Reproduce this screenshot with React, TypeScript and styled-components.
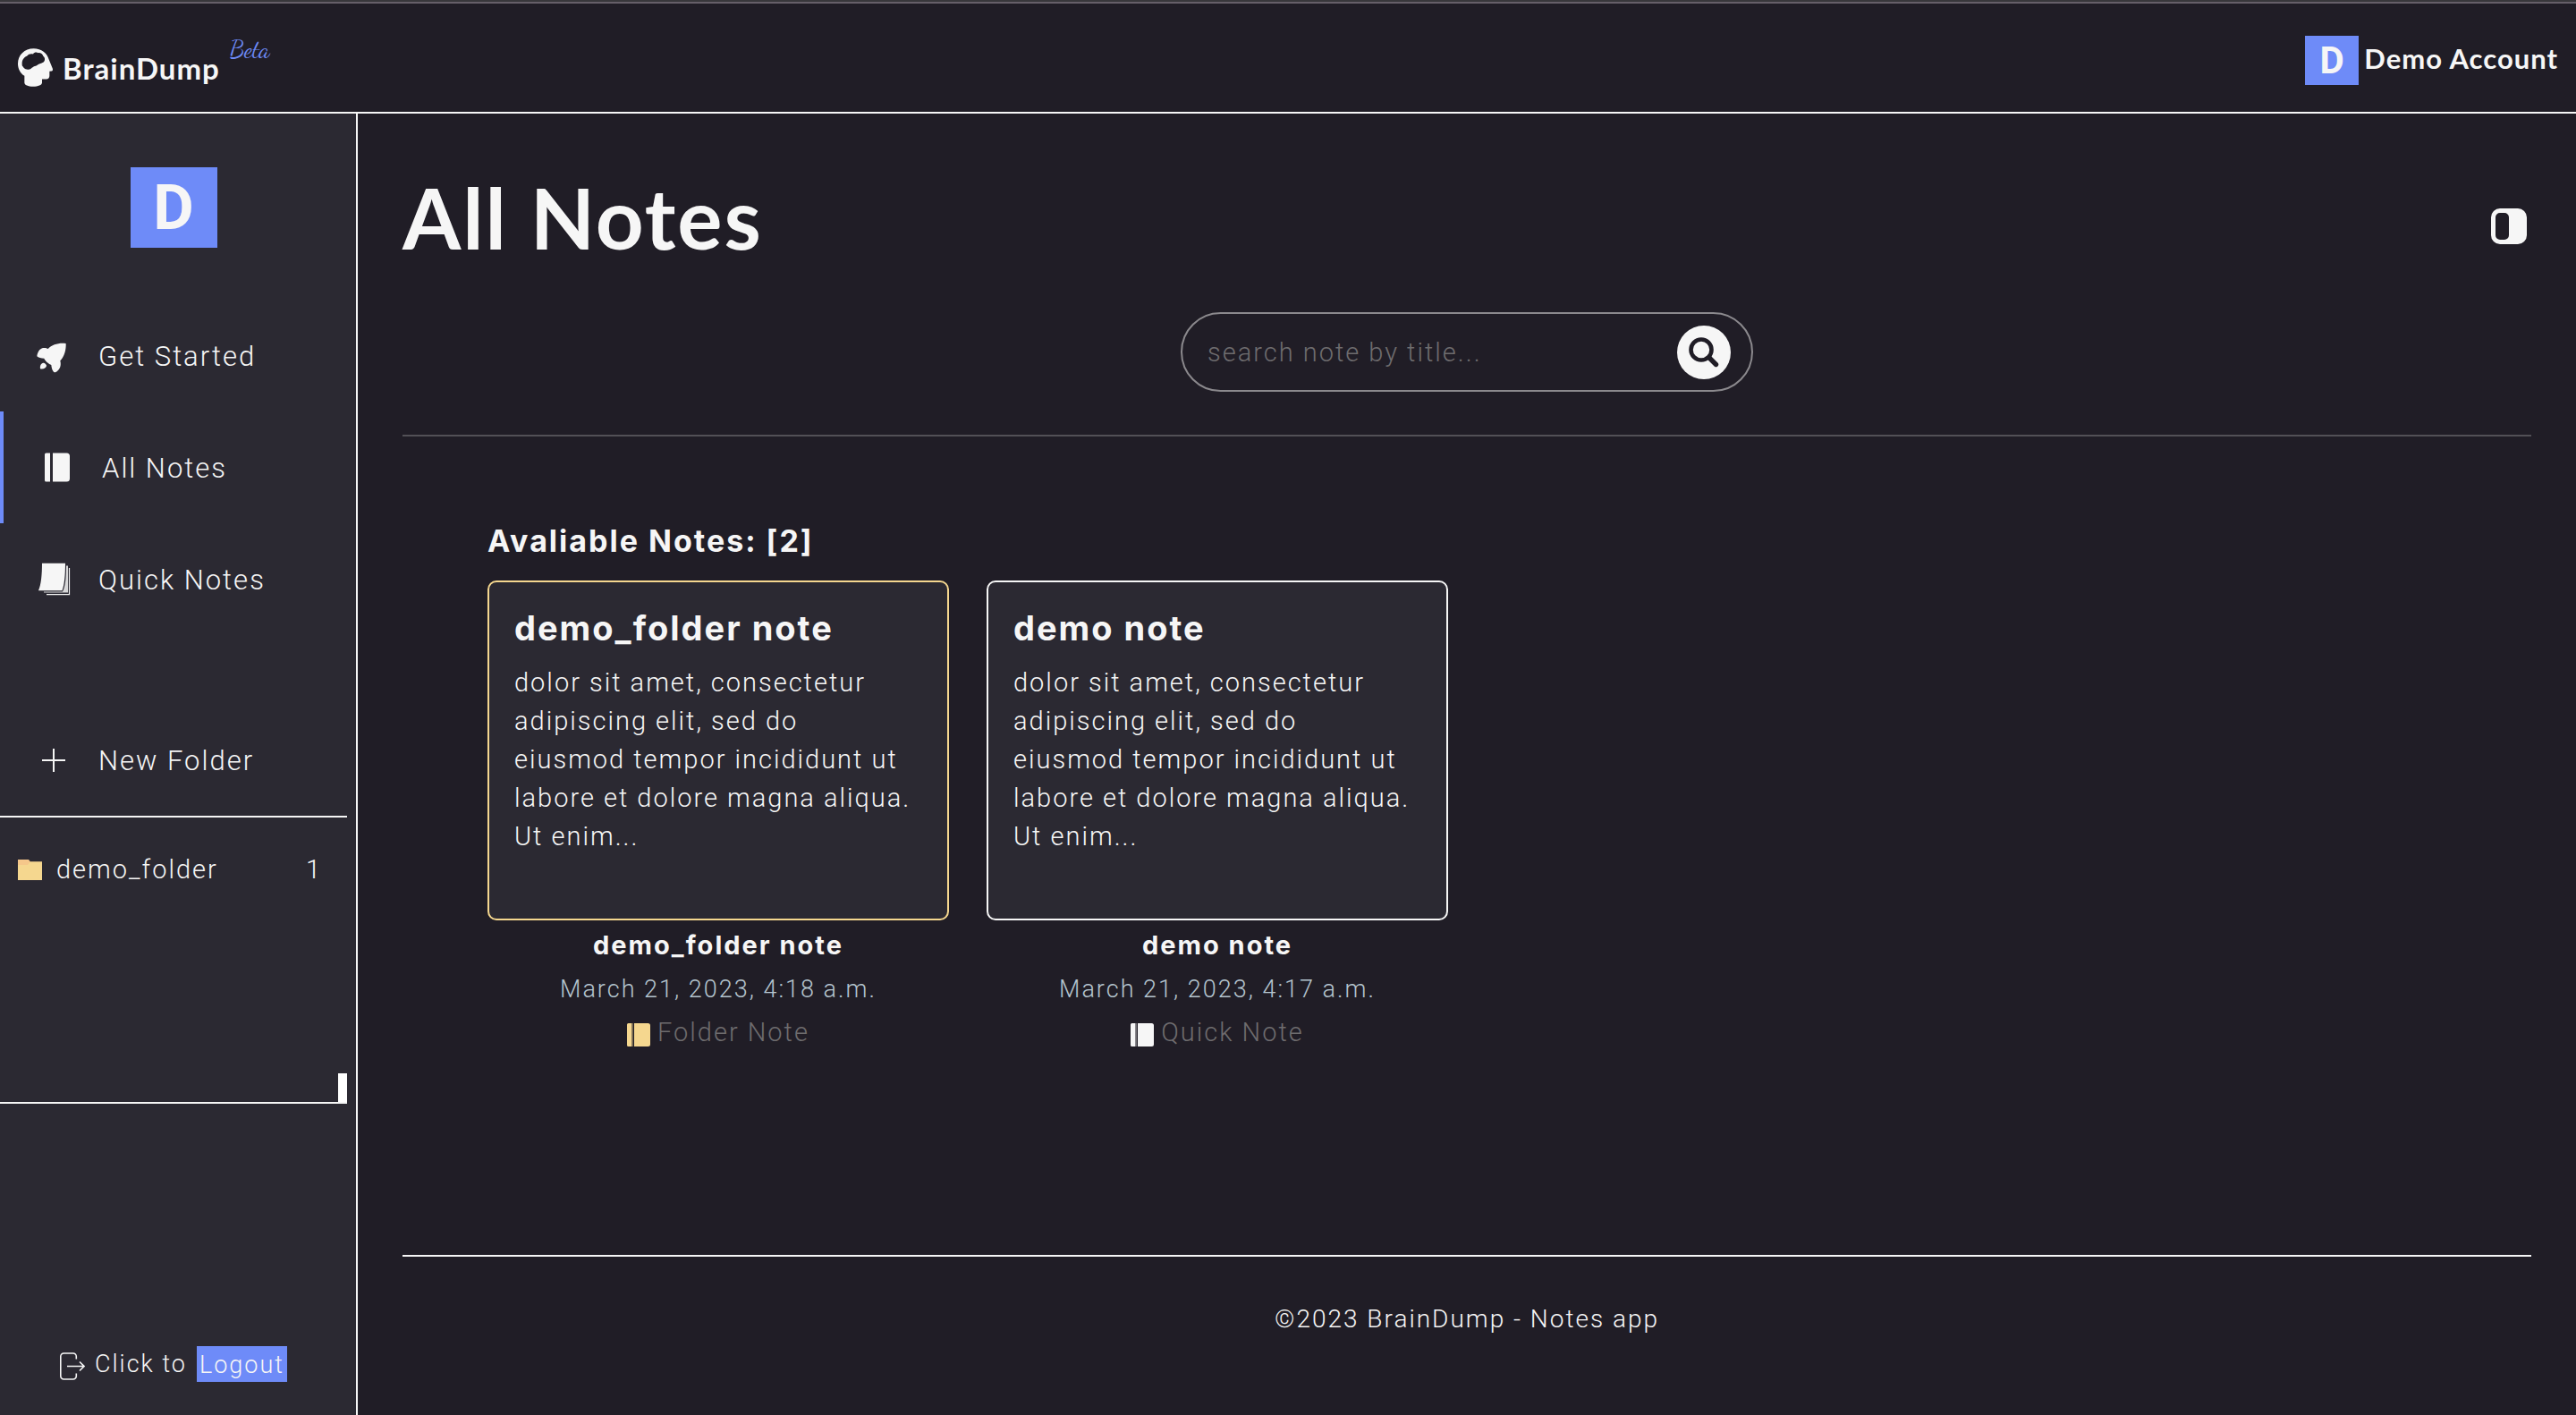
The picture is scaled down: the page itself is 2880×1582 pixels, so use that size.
import React from "react";
import styled, { createGlobalStyle, css } from "styled-components";

const color = {
  page: "#201d26",
  panel: "#2b2932",
  text: "#f6f6f6",
  muted: "#6e6c6e",
  date: "#b4c4ce",
  accent: "#6e8bf8",
  folder: "#f5d78f",
};

const display = css`
  font-family: Lato, "Liberation Sans", sans-serif;
  font-weight: 700;
`;

const heading = css`
  font-family: Inter, "Liberation Sans", sans-serif;
  font-weight: 700;
`;

const GlobalStyle = createGlobalStyle`
  *, *::before, *::after { box-sizing: border-box; }
  body {
    margin: 0;
    background: ${color.page};
    color: ${color.text};
    font-family: Roboto, "Liberation Sans", sans-serif;
    font-weight: 300;
    font-size: 29px;
    line-height: 40px;
    letter-spacing: 2px;
  }
  h1, h2, h3, p, ul { margin: 0; padding: 0; }
  ul { list-style: none; }
  a { color: inherit; text-decoration: none; }
  button, input {
    font: inherit;
    color: inherit;
    letter-spacing: inherit;
    border: 0;
    padding: 0;
    background: none;
  }
  button { cursor: pointer; }
  svg { display: block; flex: none; }
`;

const Page = styled.div`
  display: flex;
  flex-direction: column;
  min-height: 100vh;
  border-top: 2px solid #38373b;
`;

const Header = styled.header`
  display: flex;
  justify-content: space-between;
  align-items: flex-start;
  padding: 36px 20px 28px;
  border-top: 2px solid #665f69;
  border-bottom: 2px solid ${color.text};
  letter-spacing: 1px;
`;

const Brand = styled.a`
  display: flex;
  align-items: flex-end;
  gap: 11px;
  height: 57px;
`;

const BrandName = styled.span`
  ${display}
  font-size: 33px;
  line-height: 42px;
`;

const Beta = styled.sup`
  align-self: flex-start;
  color: ${color.accent};
  font-family: "Dancing Script", "Liberation Serif", cursive;
  font-weight: 400;
  font-size: 27px;
  line-height: 32px;
  letter-spacing: 0;
`;

const Account = styled.a`
  ${display}
  display: flex;
  gap: 6px;
  font-size: 31px;
  line-height: 50px;
`;

const Avatar = styled.span<{ $large?: boolean }>`
  flex: none;
  width: ${(p) => (p.$large ? 97 : 60)}px;
  height: ${(p) => (p.$large ? 90 : 55)}px;
  background: ${color.accent};
  font-family: Roboto, "Liberation Sans", sans-serif;
  font-weight: 700;
  font-size: ${(p) => (p.$large ? 70 : 42)}px;
  line-height: ${(p) => (p.$large ? 90 : 56)}px;
  letter-spacing: 0;
  text-align: center;
`;

const Body = styled.div`
  display: flex;
  flex: 1;
`;

const Sidebar = styled.aside`
  display: flex;
  flex-direction: column;
  flex: none;
  width: 400px;
  padding: 60px 10px 37px 0;
  background: ${color.panel};
  border-right: 2px solid ${color.text};
`;

const Profile = styled.div`
  display: flex;
  justify-content: center;
  padding-bottom: 58px;
`;

const navItem = css`
  display: flex;
  align-items: center;
  gap: 30px;
  width: 100%;
  height: 125px;
  padding-left: 40px;
  font-size: 31px;
  text-align: left;
`;

const NavLink = styled.a<{ $active?: boolean }>`
  ${navItem}
  border-left: ${(p) => (p.$active ? `4px solid ${color.accent}` : "0")};
`;

const NewFolder = styled.button`
  ${navItem}
  flex: none;
  margin-top: 77px;
`;

const NavLabel = styled.span`
  padding-top: 3px;
`;

const IconSlot = styled.span`
  display: flex;
  align-items: center;
  flex: none;
  width: 40px;
  height: 40px;
`;

const Folders = styled.section`
  display: flex;
  flex-direction: column;
  flex: none;
  height: 322px;
  border-top: 2px solid ${color.text};
  border-bottom: 2px solid ${color.text};
`;

const FolderRow = styled.a`
  display: flex;
  align-items: center;
  gap: 16px;
  padding: 38px 28px 0 20px;
`;

const FolderCount = styled.span`
  margin-left: auto;
`;

const ScrollThumb = styled.div`
  width: 10px;
  height: 32px;
  margin: auto 0 0 auto;
  background: #fff;
`;

const LogoutRow = styled.div`
  display: flex;
  align-items: center;
  justify-content: center;
  gap: 11px;
  margin-top: auto;
  font-size: 27px;
`;

const LogoutButton = styled.button`
  padding: 2px 3px 0;
  background: ${color.accent};
  line-height: 38px;
`;

const Main = styled.main`
  display: flex;
  flex-direction: column;
  flex: 1;
  min-width: 0;
  padding: 58px 50px 0;
`;

const TitleBar = styled.div`
  display: flex;
  justify-content: space-between;
  align-items: flex-end;
`;

const Title = styled.h1`
  ${display}
  font-size: 94px;
  line-height: 115px;
`;

const LayoutToggle = styled.button`
  padding: 0 5px 27px 0;
`;

const Search = styled.form`
  display: flex;
  align-items: center;
  align-self: center;
  width: 640px;
  height: 89px;
  margin: 49px 0 48px;
  padding: 0 23px 0 28px;
  border: 2px solid #8b898d;
  border-radius: 45px;
`;

const SearchInput = styled.input`
  flex: 1;
  min-width: 0;
  outline: 0;
  &::placeholder {
    color: ${color.muted};
    opacity: 1;
  }
`;

const SearchButton = styled.button`
  display: grid;
  place-items: center;
  width: 60px;
  height: 60px;
  border-radius: 50%;
  background: ${color.text};
  color: ${color.page};
`;

const Notes = styled.section`
  padding: 95px 95px 60px;
  border-top: 2px solid #525056;
`;

const NotesHeading = styled.h2`
  ${heading}
  font-size: 34px;
  line-height: 44px;
`;

const NoteGrid = styled.ul`
  display: flex;
  flex-wrap: wrap;
  gap: 42px;
  padding-top: 22px;
`;

const NoteItem = styled.li`
  display: flex;
  flex-direction: column;
  align-items: center;
  gap: 8px;
  width: 516px;
`;

const Card = styled.a<{ $edge: string }>`
  width: 100%;
  height: 380px;
  padding: 28px 38px 28px 28px;
  background: ${color.panel};
  border: 2px solid ${(p) => p.$edge};
  border-radius: 10px;
`;

const CardTitle = styled.h3`
  ${heading}
  padding-bottom: 17px;
  font-size: 38px;
  line-height: 46px;
`;

const CardText = styled.p`
  line-height: 43px;
`;

const Caption = styled.p`
  ${heading}
`;

const NoteDate = styled.p`
  color: ${color.date};
  font-size: 27px;
  line-height: 42px;
`;

const NoteKind = styled.p`
  display: flex;
  align-items: center;
  gap: 8px;
  color: ${color.muted};
  line-height: 38px;
`;

const Footer = styled.footer`
  margin-top: auto;
  padding: 50px 0 87px;
  border-top: 2px solid ${color.text};
  font-size: 28px;
  text-align: center;
`;

const HeadLogo = () => (
  <svg width="39" height="43" viewBox="0 0 117 128" fill={color.text} fillRule="evenodd" aria-hidden="true">
    <path d="M53 0C79 0 98 15 104 37L116 66C118 71 117 76 112 76L106 77V92C106 99 102 103 95 103L81 103V115C81 122 68 128 51 128S22 122 22 115V92C8 83 0 67 0 51C0 22 22 0 53 0ZM14 54C13 41 19 30 30 26C35 18 45 17 51 19C54 13 63 12 68 15C76 14 83 19 85 26C91 31 92 39 87 45C82 48 78 50 74 51C68 53 64 56 60 59C54 59 51 63 47 65C43 70 37 72 30 70C24 70 19 66 18 62C15 60 14 57 14 54Z" />
  </svg>
);

const RocketIcon = () => (
  <svg width="40" height="40" viewBox="30 22 120 120" fill={color.text} aria-hidden="true">
    <path d="M131 40C132 61 126 84 112 98C116 114 112 129 96 137C88 138 83 125 82 112C74 109 62 99 58 90C48 90 38 87 34 83C35 70 43 57 54 55C61 54 68 56 71 58C85 43 108 37 131 40Z" />
    <path d="M45 125C43 113 49 105 57 105C62 107 66 111 66 115C64 123 56 127 45 125Z" />
  </svg>
);

const AllNotesIcon = () => (
  <svg width="40" height="40" viewBox="0 0 40 40" fill={color.text} aria-hidden="true">
    <path d="M7.500 3.500H12V35.500H7.500A1.500 1.500 0 0 1 6 34V5A1.500 1.500 0 0 1 7.500 3.500ZM15 3.500H30.500A3.500 3.500 0 0 1 34 7V32A3.500 3.500 0 0 1 30.500 35.500H15Z" />
  </svg>
);

const SmallBookIcon = ({ fill }: { fill: string }) => (
  <svg width="26" height="32" viewBox="0 0 26 32" fill={fill} aria-hidden="true">
    <path d="M1.500 6H5.500V32H1.500A1.500 1.500 0 0 1 0 30.500V7.500A1.500 1.500 0 0 1 1.500 6ZM8 6H23.500A2.500 2.500 0 0 1 26 8.500V29.500A2.500 2.500 0 0 1 23.500 32H8Z" />
    <path d="M6.200 6H7V32H6.200Z" opacity="0.500" />
  </svg>
);

const QuickNotesIcon = () => (
  <svg width="40" height="40" viewBox="0 0 40 40" aria-hidden="true">
    <path d="M7 1.800H33C33 15 32 26 29.500 32.200H3C6 26 7 14 7 1.800Z" fill={color.text} />
    <path d="M34 4.500H36V34.500H9V33.600H30C33 28 34 18 34 4.500Z" fill={color.text} opacity="0.850" />
    <path d="M37.500 7V36.700H12" fill="none" stroke={color.text} strokeWidth="1.200" />
  </svg>
);

const PlusIcon = () => (
  <svg width="40" height="40" viewBox="0 0 40 40" fill={color.text} aria-hidden="true">
    <path d="M19 7H21V33H19ZM7 19H33V21H7Z" />
  </svg>
);

const FolderIcon = () => (
  <svg width="27" height="23" viewBox="0 0 27 23" aria-hidden="true">
    <path d="M0 0H12L14 2.500H27V8H0Z" fill="#f5c78a" />
    <path d="M0 6H11L14 2.500H27V23H0Z" fill={color.folder} />
  </svg>
);

const LogoutIcon = () => (
  <svg width="28" height="35" viewBox="0 -4 28 35" fill="none" stroke={color.text} strokeWidth="1.600" aria-hidden="true">
    <path d="M18.300 7.500V4.500A3.500 3.500 0 0 0 14.800 1H4.300A3.500 3.500 0 0 0 0.800 4.500V26.500A3.500 3.500 0 0 0 4.300 30H14.800A3.500 3.500 0 0 0 18.300 26.500V23.500" />
    <path d="M8 15.500H27M22 10.500L27 15.500L22 20.500" />
  </svg>
);

const SearchIcon = () => (
  <svg width="34" height="34" viewBox="0 0 34 34" fill="none" stroke="currentColor" aria-hidden="true">
    <circle cx="14" cy="14" r="11.500" strokeWidth="4.600" />
    <path d="M23 23L30.500 30.500" strokeWidth="5.400" strokeLinecap="round" />
  </svg>
);

const PanelIcon = () => (
  <svg width="40" height="40" viewBox="0 0 40 40" fill={color.text} fillRule="evenodd" aria-hidden="true">
    <path d="M10 0H30A10 10 0 0 1 40 10V30A10 10 0 0 1 30 40H10A10 10 0 0 1 0 30V10A10 10 0 0 1 10 0ZM10 5A5 5 0 0 0 5 10V30A5 5 0 0 0 10 35H15A5 5 0 0 0 20 30V10A5 5 0 0 0 15 5Z" />
  </svg>
);

const navigation = [
  { label: "Get Started", icon: <RocketIcon /> },
  { label: "All Notes", icon: <AllNotesIcon />, active: true },
  { label: "Quick Notes", icon: <QuickNotesIcon /> },
];

const excerpt =
  "dolor sit amet, consectetur adipiscing elit, sed do eiusmod tempor incididunt ut labore et dolore magna aliqua. Ut enim...";

const notes = [
  { title: "demo_folder note", date: "March 21, 2023, 4:18 a.m.", kind: "Folder Note", tint: color.folder },
  { title: "demo note", date: "March 21, 2023, 4:17 a.m.", kind: "Quick Note", tint: color.text },
];

export default function App() {
  return (
    <Page>
      <GlobalStyle />
      <Header>
        <Brand href="#">
          <HeadLogo />
          <BrandName>BrainDump</BrandName>
          <Beta>Beta</Beta>
        </Brand>
        <Account href="#account">
          <Avatar>D</Avatar>
          <span>Demo Account</span>
        </Account>
      </Header>
      <Body>
        <Sidebar>
          <Profile>
            <Avatar $large>D</Avatar>
          </Profile>
          <nav>
            {navigation.map((item) => (
              <NavLink key={item.label} href="#" $active={item.active}>
                <IconSlot>{item.icon}</IconSlot>
                <NavLabel>{item.label}</NavLabel>
              </NavLink>
            ))}
          </nav>
          <NewFolder type="button">
            <IconSlot>
              <PlusIcon />
            </IconSlot>
            <NavLabel>New Folder</NavLabel>
          </NewFolder>
          <Folders>
            <FolderRow href="#demo_folder">
              <FolderIcon />
              demo_folder
              <FolderCount>1</FolderCount>
            </FolderRow>
            <ScrollThumb />
          </Folders>
          <LogoutRow>
            <LogoutIcon />
            <span>Click to</span>
            <LogoutButton type="button">Logout</LogoutButton>
          </LogoutRow>
        </Sidebar>
        <Main>
          <TitleBar>
            <Title>All Notes</Title>
            <LayoutToggle type="button" aria-label="Toggle layout">
              <PanelIcon />
            </LayoutToggle>
          </TitleBar>
          <Search role="search">
            <SearchInput type="text" aria-label="Search note by title" placeholder="search note by title..." />
            <SearchButton type="button" aria-label="Search">
              <SearchIcon />
            </SearchButton>
          </Search>
          <Notes>
            <NotesHeading>Avaliable Notes: [{notes.length}]</NotesHeading>
            <NoteGrid>
              {notes.map((note) => (
                <NoteItem key={note.title}>
                  <Card href="#" $edge={note.tint}>
                    <CardTitle>{note.title}</CardTitle>
                    <CardText>{excerpt}</CardText>
                  </Card>
                  <Caption>{note.title}</Caption>
                  <NoteDate>{note.date}</NoteDate>
                  <NoteKind>
                    <SmallBookIcon fill={note.tint} />
                    {note.kind}
                  </NoteKind>
                </NoteItem>
              ))}
            </NoteGrid>
          </Notes>
          <Footer>©2023 BrainDump - Notes app</Footer>
        </Main>
      </Body>
    </Page>
  );
}
